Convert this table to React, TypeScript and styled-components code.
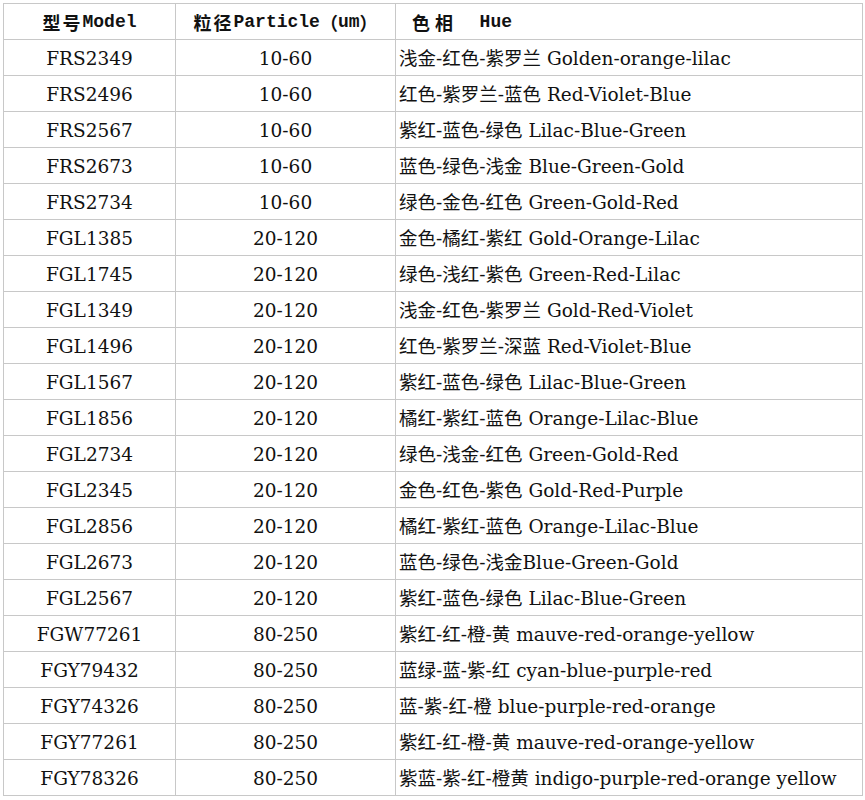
import React from 'react'
import styled, {createGlobalStyle} from 'styled-components'

const GlobalStyle = createGlobalStyle`
    html, body {
        margin: 0;
        padding: 0;
        background: #fff;
    }
`

const Page = styled.div`
    padding: 3px 0 0 3px;
    width: 865px;
    height: 800px;
    box-sizing: border-box;
    background: #fff;
`

const Sheet = styled.div`
    display: grid;
    grid-template-columns: 171px 219px 466px;
    grid-auto-rows: 35px;
    gap: 1px;
    padding: 1px;
    width: max-content;
    background: #c8c8c8;
`

const HeadCell = styled.div<{ $left?: boolean }>`
    display: flex;
    align-items: center;
    justify-content: ${p => p.$left ? 'flex-start' : 'center'};
    padding-left: ${p => p.$left ? '16px' : '0'};
    padding-top: 1px;
    background: #fff;
    color: #111;
    font-family: "Liberation Mono", "Noto Sans CJK SC", monospace;
    font-weight: bold;
    font-size: 18px;
    line-height: 22px;
    white-space: pre;
`

const Cjk = styled.span<{ $spacing?: number }>`
    font-family: "Noto Sans CJK SC", sans-serif;
    font-weight: 700;
    letter-spacing: ${p => p.$spacing || 0}px;
`

const Cell = styled.div<{ $left?: boolean }>`
    display: flex;
    align-items: center;
    justify-content: ${p => p.$left ? 'flex-start' : 'center'};
    padding-left: ${p => p.$left ? '3px' : '0'};
    padding-top: 2px;
    background: #fff;
    color: #111;
    font-family: "DejaVu Serif", "Noto Sans CJK SC", serif;
    font-size: 18.5px;
    line-height: 22px;
    white-space: pre;
`

const rows = [
    ['FRS2349', '10-60', '浅金-红色-紫罗兰 Golden-orange-lilac'],
    ['FRS2496', '10-60', '红色-紫罗兰-蓝色 Red-Violet-Blue'],
    ['FRS2567', '10-60', '紫红-蓝色-绿色 Lilac-Blue-Green'],
    ['FRS2673', '10-60', '蓝色-绿色-浅金 Blue-Green-Gold'],
    ['FRS2734', '10-60', '绿色-金色-红色 Green-Gold-Red'],
    ['FGL1385', '20-120', '金色-橘红-紫红 Gold-Orange-Lilac'],
    ['FGL1745', '20-120', '绿色-浅红-紫色 Green-Red-Lilac'],
    ['FGL1349', '20-120', '浅金-红色-紫罗兰 Gold-Red-Violet'],
    ['FGL1496', '20-120', '红色-紫罗兰-深蓝 Red-Violet-Blue'],
    ['FGL1567', '20-120', '紫红-蓝色-绿色 Lilac-Blue-Green'],
    ['FGL1856', '20-120', '橘红-紫红-蓝色 Orange-Lilac-Blue'],
    ['FGL2734', '20-120', '绿色-浅金-红色 Green-Gold-Red'],
    ['FGL2345', '20-120', '金色-红色-紫色 Gold-Red-Purple'],
    ['FGL2856', '20-120', '橘红-紫红-蓝色 Orange-Lilac-Blue'],
    ['FGL2673', '20-120', '蓝色-绿色-浅金Blue-Green-Gold'],
    ['FGL2567', '20-120', '紫红-蓝色-绿色 Lilac-Blue-Green'],
    ['FGW77261', '80-250', '紫红-红-橙-黄 mauve-red-orange-yellow'],
    ['FGY79432', '80-250', '蓝绿-蓝-紫-红 cyan-blue-purple-red'],
    ['FGY74326', '80-250', '蓝-紫-红-橙 blue-purple-red-orange'],
    ['FGY77261', '80-250', '紫红-红-橙-黄 mauve-red-orange-yellow'],
    ['FGY78326', '80-250', '紫蓝-紫-红-橙黄 indigo-purple-red-orange yellow'],
]

export default function App() {
    return (
        <Page>
            <GlobalStyle/>
            <Sheet>
                <HeadCell><Cjk $spacing={2}>型号</Cjk>Model</HeadCell>
                <HeadCell><Cjk $spacing={2}>粒径</Cjk>Particle<Cjk>（</Cjk>um<Cjk>）</Cjk></HeadCell>
                <HeadCell $left><Cjk $spacing={5}>色相</Cjk>  Hue</HeadCell>
                {rows.map(([model, size, hue], i) => (
                    <React.Fragment key={i}>
                        <Cell>{model}</Cell>
                        <Cell>{size}</Cell>
                        <Cell $left>{hue}</Cell>
                    </React.Fragment>
                ))}
            </Sheet>
        </Page>
    )
}
